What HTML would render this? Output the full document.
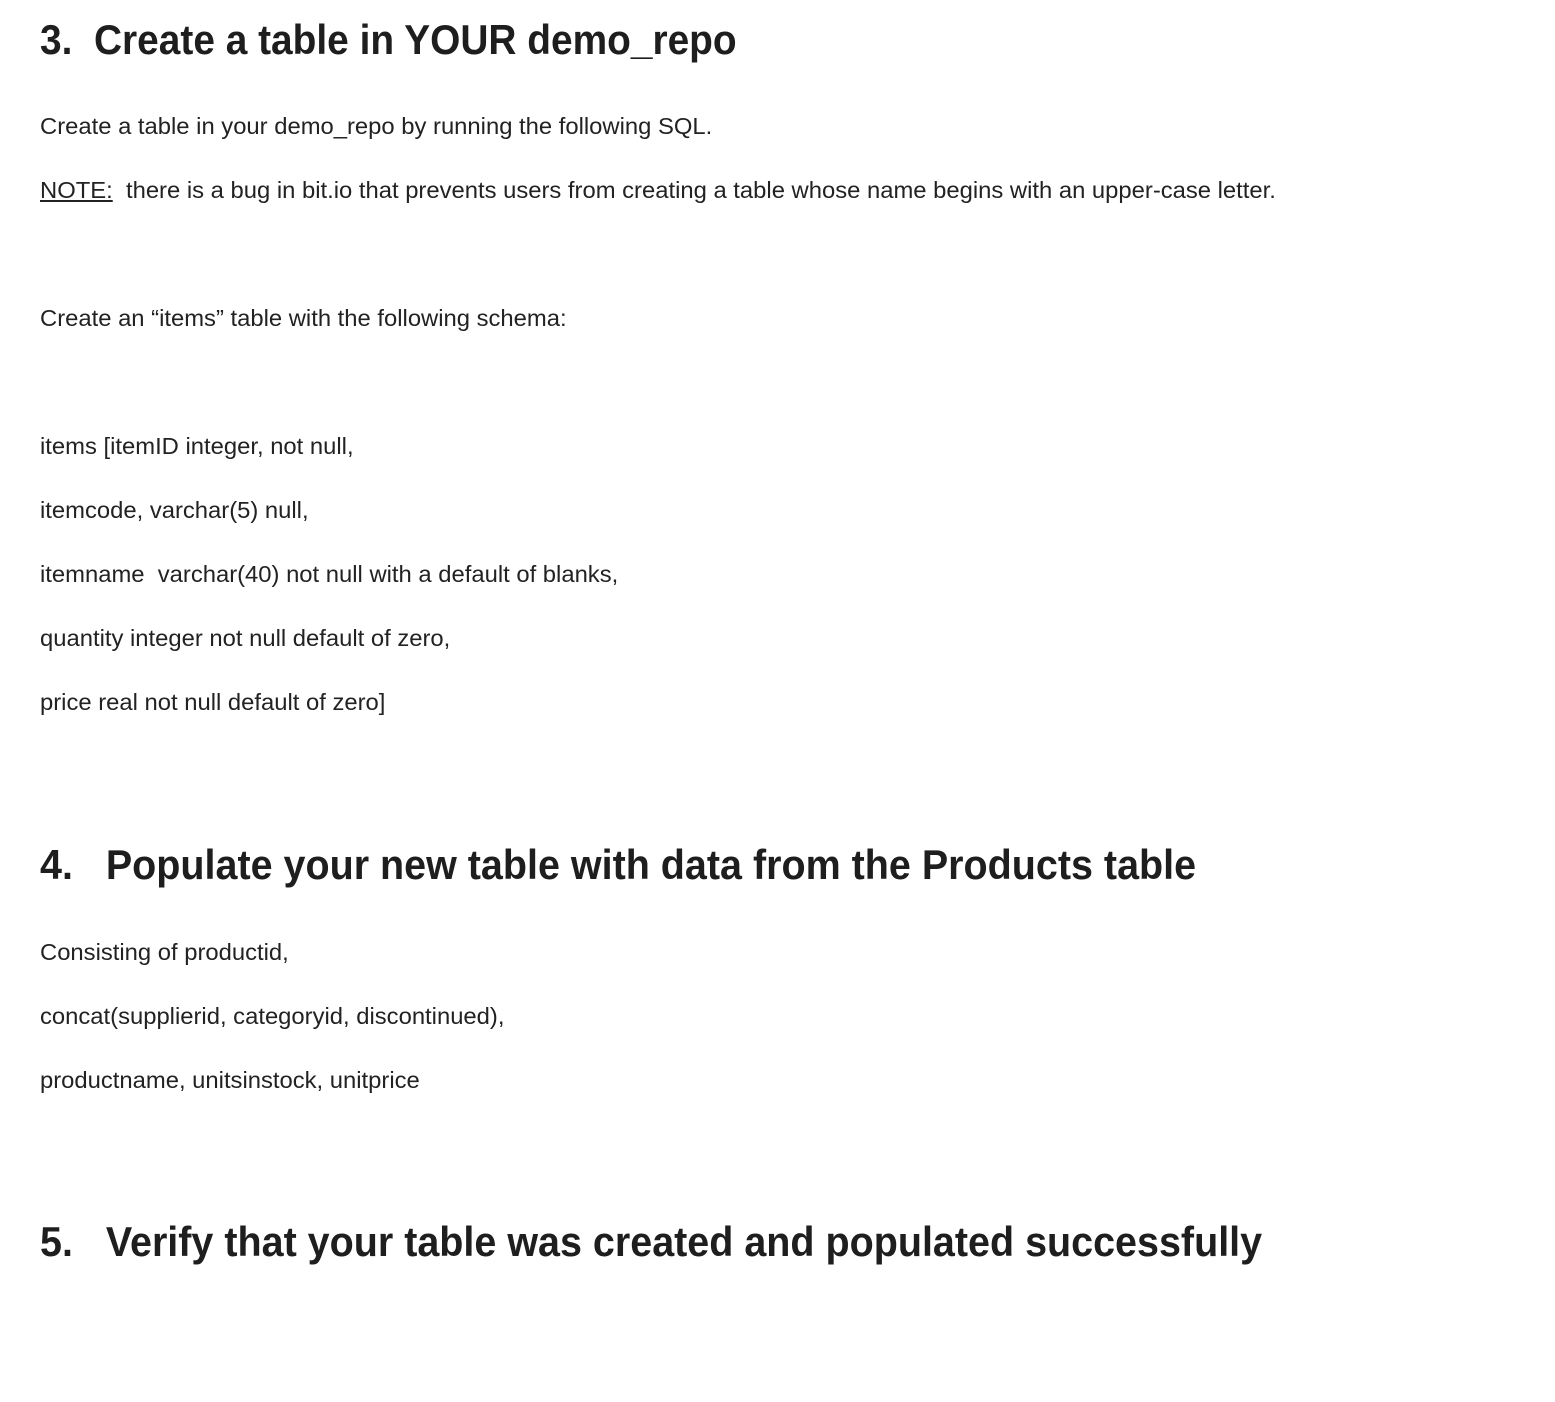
<!DOCTYPE html>
<html><head><meta charset="utf-8"><style>
html,body{margin:0;padding:0;background:#fff;width:1555px;height:1402px;overflow:hidden}
body{font-family:"Liberation Sans",Arial,sans-serif;color:#222;position:relative}
.p{position:absolute;left:40px;font-size:23px;line-height:30px;white-space:nowrap;transform-origin:0 50%;transform:scaleX(1.035)}
.h{position:absolute;left:40px;font-size:42px;line-height:50px;font-weight:bold;white-space:pre;transform-origin:0 50%;transform:scaleX(0.94);color:#1e1e1e}
u{text-decoration:underline}
</style></head><body>
<div class="h" style="top:15px;transform:scaleX(0.925)">3.  Create a table in YOUR demo_repo</div>
<div class="p" style="top:111px">Create a table in your demo_repo by running the following SQL.</div>
<div class="p" style="top:175px"><u>NOTE:</u>&nbsp; there is a bug in bit.io that prevents users from creating a table whose name begins with an upper-case letter.</div>
<div class="p" style="top:303px">Create an “items” table with the following schema:</div>
<div class="p" style="top:431px">items [itemID integer, not null,</div>
<div class="p" style="top:495px">itemcode, varchar(5) null,</div>
<div class="p" style="top:559px">itemname&nbsp; varchar(40) not null with a default of blanks,</div>
<div class="p" style="top:623px">quantity integer not null default of zero,</div>
<div class="p" style="top:687px">price real not null default of zero]</div>
<div class="h" style="top:840px">4.   Populate your new table with data from the Products table</div>
<div class="p" style="top:937px">Consisting of productid,</div>
<div class="p" style="top:1001px">concat(supplierid, categoryid, discontinued),</div>
<div class="p" style="top:1065px">productname, unitsinstock, unitprice</div>
<div class="h" style="top:1217px">5.   Verify that your table was created and populated successfully</div>
</body></html>
